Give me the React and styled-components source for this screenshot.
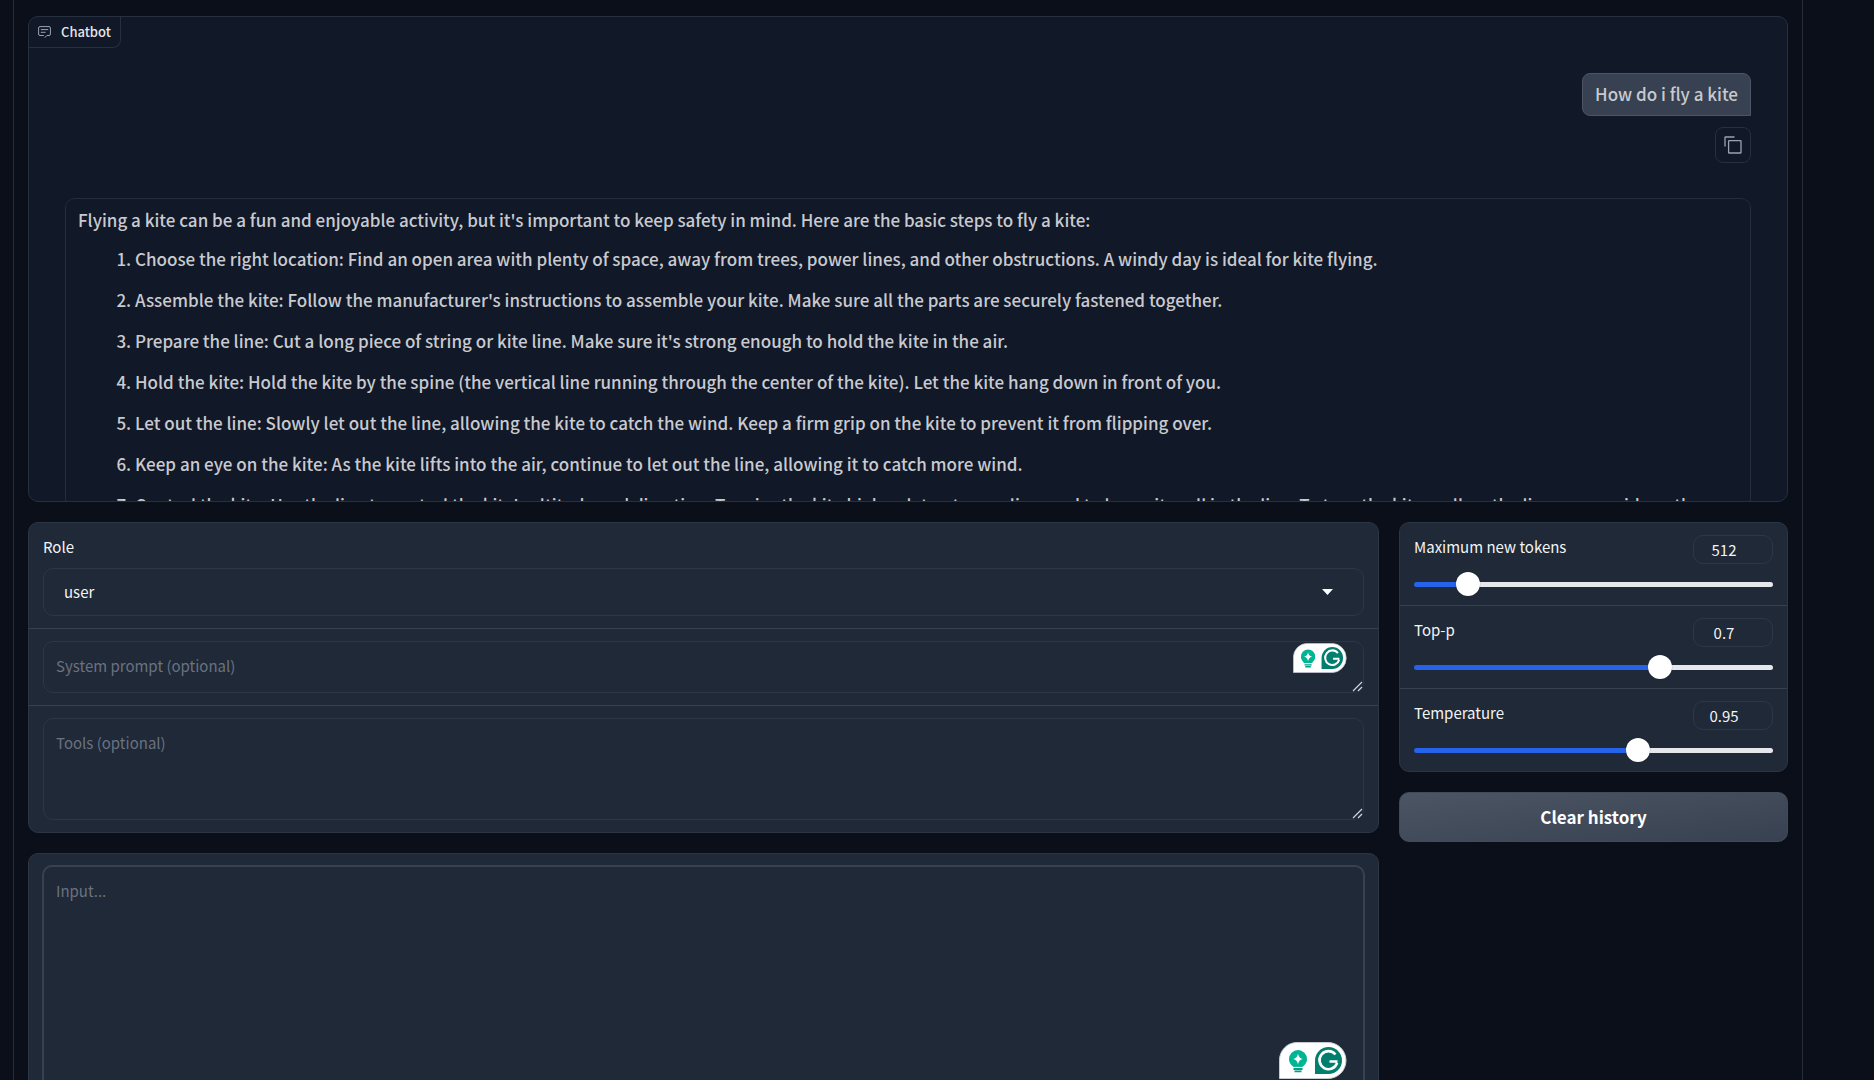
import { useState } from "react";
import styled, { createGlobalStyle } from "styled-components";

const GlobalStyle = createGlobalStyle`
  * {
    box-sizing: border-box;
  }

  body {
    margin: 0;
    background: #0b0f19;
    color: #f3f4f6;
    font-family: "Noto Sans CJK SC", "Open Sans", sans-serif;
    font-size: 15px;
    line-height: 24px;
  }

  button, input, select, textarea {
    font: inherit;
    color: inherit;
  }
`;

const Page = styled.div`
  height: 100vh;
  overflow: hidden;
  padding: 0 71px 0 13px;
`;

const Container = styled.main`
  min-height: 100%;
  display: flex;
  flex-direction: column;
  gap: 20px;
  padding: 16px 14px 0;
  border: 1px solid #252b37;
  border-width: 0 1px;
`;

const ChatPanel = styled.section`
  height: 486px;
  overflow: hidden;
  background: #111827;
  border: 1px solid #27303f;
  border-radius: 10px;
`;

const ChatLabel = styled.h2`
  width: max-content;
  height: 31px;
  margin: 0;
  padding: 0 9px;
  display: flex;
  align-items: center;
  gap: 10px;
  border: 1px solid #27303f;
  border-width: 0 1px 1px 0;
  border-radius: 0 0 8px 0;
  font-size: 13px;
  font-weight: 500;
  color: #e5e7eb;
`;

const Messages = styled.div`
  padding: 25px 36px 0;
  display: flex;
  flex-direction: column;
  font-size: 17px;
  font-weight: 500;
  line-height: 27px;
  color: #c8cad0;
`;

const UserBubble = styled.div`
  align-self: flex-end;
  padding: 6px 12px 8px;
  background: #374151;
  border: 1px solid #4b5563;
  border-radius: 8px 8px 0 8px;
`;

const CopyButton = styled.button`
  align-self: flex-end;
  width: 36px;
  height: 36px;
  margin: 11px 0 35px;
  padding: 0;
  display: grid;
  place-items: center;
  background: none;
  border: 1px solid #263040;
  border-radius: 8px;
  color: #9ca3af;
`;

const BotBubble = styled.div`
  padding: 7px 12px;
  border: 1px solid #232d3c;
  border-radius: 10px 10px 10px 0;
`;

const Intro = styled.p`
  margin: 0;
`;

const Steps = styled.ol`
  margin: 12px 0;
  padding: 0 20px 0 57px;
  display: flex;
  flex-direction: column;
  gap: 14px;
`;

const Columns = styled.div`
  display: grid;
  grid-template-columns: minmax(0, 1351fr) minmax(0, 389fr);
  gap: 20px;
`;

const Column = styled.div`
  display: flex;
  flex-direction: column;
  gap: 20px;
`;

const Panel = styled.div`
  overflow: hidden;
  background: #1f2937;
  border: 1px solid #2b3544;
  border-radius: 10px;
`;

const Block = styled.div`
  position: relative;
  padding: ${(props) => (props.$tight ? "11px 13px" : "12px 14px")};
  border-bottom: 1px solid #374151;

  &:last-child {
    border-bottom: 0;
  }
`;

const FieldLabel = styled.label`
  display: block;
  margin-bottom: 9px;
`;

const SelectWrap = styled.div`
  display: grid;
  align-items: center;

  > * {
    grid-area: 1 / 1;
  }

  svg {
    justify-self: end;
    margin-right: 31px;
    pointer-events: none;
  }
`;

const Select = styled.select`
  width: 100%;
  height: 48px;
  padding: 0 20px;
  appearance: none;
  background: #1f2937;
  border: 1px solid #2d3747;
  border-radius: 10px;
`;

const resizeGrip =
  "%3Csvg xmlns='http://www.w3.org/2000/svg' width='15' height='15' viewBox='0 0 15 15'%3E%3Cpath d='M5 14L14 5M10 14L14 10' stroke='%23d1d5db' stroke-width='1.200'/%3E%3C/svg%3E";

const TextArea = styled.textarea`
  display: block;
  width: 100%;
  height: ${(props) => props.$height}px;
  padding: 12px;
  background: #1f2937;
  border: ${(props) => (props.$strong ? "2px solid #374151" : "1px solid #2d3747")};
  border-radius: 10px;
  outline: none;
  overflow: hidden;

  &::placeholder {
    color: #6b7280;
    opacity: 1;
  }

  &::-webkit-resizer {
    background: url("data:image/svg+xml,${resizeGrip}") right bottom no-repeat;
  }
`;

const Assistant = styled.svg`
  position: absolute;
  right: 31px;
  ${(props) => (props.$large ? "bottom: 37px;" : "top: 14px;")}
`;

const SliderHead = styled.div`
  display: flex;
  justify-content: space-between;
  align-items: flex-start;
`;

const NumberInput = styled.input`
  width: 80px;
  height: 29px;
  padding: 0 18px 0 0;
  background: none;
  border: 1px solid #2d3747;
  border-radius: 10px;
  text-align: center;
  appearance: textfield;

  &::-webkit-inner-spin-button {
    display: none;
  }
`;

const Range = styled.input`
  display: block;
  width: 100%;
  height: 24px;
  margin: 8px 0 -3px;
  appearance: none;
  background: none;

  &::-webkit-slider-runnable-track {
    height: 5px;
    border-radius: 4px;
    background: linear-gradient(#2563eb, #2563eb) 0 / var(--fill) 100% no-repeat #e5e7eb;
  }

  &::-webkit-slider-thumb {
    appearance: none;
    width: 24px;
    height: 24px;
    margin-top: -10px;
    border-radius: 50%;
    background: #fff;
    box-shadow: 0 0 1px rgba(0, 0, 0, 0.5);
  }
`;

const ClearButton = styled.button`
  height: 50px;
  background: linear-gradient(to bottom right, #4b5563, #374151);
  border: 1px solid #414b5a;
  border-radius: 10px;
  font-size: 17px;
  font-weight: 700;
  color: #fff;
`;

const steps = [
  "Choose the right location: Find an open area with plenty of space, away from trees, power lines, and other obstructions. A windy day is ideal for kite flying.",
  "Assemble the kite: Follow the manufacturer's instructions to assemble your kite. Make sure all the parts are securely fastened together.",
  "Prepare the line: Cut a long piece of string or kite line. Make sure it's strong enough to hold the kite in the air.",
  "Hold the kite: Hold the kite by the spine (the vertical line running through the center of the kite). Let the kite hang down in front of you.",
  "Let out the line: Slowly let out the line, allowing the kite to catch the wind. Keep a firm grip on the kite to prevent it from flipping over.",
  "Keep an eye on the kite: As the kite lifts into the air, continue to let out the line, allowing it to catch more wind.",
  "Control the kite: Use the line to control the kite's altitude and direction. To raise the kite higher, let out more line, and to lower it, pull in the line. To turn the kite, pull on the line on one side or the other.",
];

const ChatIcon = () => (
  <svg width="13" height="12" viewBox="0 0 13 12" fill="none" stroke="#9ca3af" strokeLinecap="round" strokeLinejoin="round">
    <path d="M5.500 9.500H2A1.400 1.400 0 0 1 .6 8V2A1.400 1.400 0 0 1 2 .6h9A1.400 1.400 0 0 1 12.400 2v6A1.400 1.400 0 0 1 11 9.500H8.800L7 11.500" />
    <path d="M3.200 3.600h6.600M3.200 6.300h4" />
  </svg>
);

const CopyIcon = () => (
  <svg width="18" height="18" viewBox="0 0 18 18" fill="none" stroke="currentColor" strokeWidth="1.300">
    <rect x="4.600" y="4.600" width="12.400" height="12.400" rx="0.600" />
    <path d="M1 10.500V1.600a.6.6 0 0 1 .6-.6h8.900" />
  </svg>
);

const AssistantBadge = ({ large }) => (
  <Assistant
    $large={large}
    width={large ? 68 : 54}
    height={large ? 37 : 30}
    viewBox="0 0 68 37"
    preserveAspectRatio="none"
    aria-hidden="true"
  >
    <path d="M.5 36.500V18A17.500 17.500 0 0 1 18 .5h31a18 18 0 0 1 0 36z" fill="#fff" stroke="#c5c9d3" />
    <path d="M19 8a9 9 0 0 0-9 9c0 4 2.500 6 4.500 8h9c2-2 4.500-4 4.500-8a9 9 0 0 0-9-9z" fill="#00b594" />
    <path d="M19 11.500c.8 3.500 1.700 4.600 5 5.500-3.300.9-4.200 2-5 5.500-.8-3.500-1.700-4.600-5-5.500 3.300-.9 4.200-2 5-5.500z" fill="#fff" />
    <path d="M14 25.500h10" stroke="#fff" strokeWidth="1.200" />
    <path d="M14.500 27h9M15.500 29.300h7" stroke="#00a083" strokeWidth="1.800" />
    <path d="M36 32V18.500A13.500 13.500 0 1 1 49.500 32z" fill="#027e6f" />
    <path d="M56.500 12.500a9 9 0 1 0 1.600 8.300M50.500 19.500h8" fill="none" stroke="#fff" strokeWidth="2.600" />
  </Assistant>
);

const Slider = ({ id, label, min, max, step, initial }) => {
  const [value, setValue] = useState(initial);
  const change = (e) => setValue(Number(e.target.value));
  const fill = ((value - min) / (max - min)) * 100;

  return (
    <Block>
      <SliderHead>
        <label htmlFor={id}>{label}</label>
        <NumberInput id={id} type="number" min={min} max={max} step={step} value={value} onChange={change} />
      </SliderHead>
      <Range
        type="range"
        aria-label={label}
        min={min}
        max={max}
        step={step}
        value={value}
        onChange={change}
        style={{ "--fill": `${fill}%` }}
      />
    </Block>
  );
};

const App = () => {
  return (
    <Page>
      <GlobalStyle />
      <Container>
        <ChatPanel>
          <ChatLabel>
            <ChatIcon />
            Chatbot
          </ChatLabel>
          <Messages>
            <UserBubble>How do i fly a kite</UserBubble>
            <CopyButton aria-label="Copy message">
              <CopyIcon />
            </CopyButton>
            <BotBubble>
              <Intro>
                Flying a kite can be a fun and enjoyable activity, but it's important to keep safety in mind. Here are
                the basic steps to fly a kite:
              </Intro>
              <Steps>
                {steps.map((step) => (
                  <li key={step}>{step}</li>
                ))}
              </Steps>
            </BotBubble>
          </Messages>
        </ChatPanel>
        <Columns>
          <Column>
            <Panel>
              <Block>
                <FieldLabel htmlFor="role">Role</FieldLabel>
                <SelectWrap>
                  <Select id="role" defaultValue="user">
                    <option>user</option>
                    <option>assistant</option>
                  </Select>
                  <svg width="11" height="6" viewBox="0 0 11 6">
                    <path d="M0 0h11L5.500 6z" fill="#fff" />
                  </svg>
                </SelectWrap>
              </Block>
              <Block>
                <TextArea $height={52} aria-label="System prompt" placeholder="System prompt (optional)" />
                <AssistantBadge />
              </Block>
              <Block>
                <TextArea $height={102} aria-label="Tools" placeholder="Tools (optional)" />
              </Block>
            </Panel>
            <Panel>
              <Block $tight>
                <TextArea $height={240} $strong aria-label="Input" placeholder="Input..." />
                <AssistantBadge large />
              </Block>
            </Panel>
          </Column>
          <Column>
            <Panel>
              <Slider id="tokens" label="Maximum new tokens" min={0} max={4096} step={1} initial={512} />
              <Slider id="top-p" label="Top-p" min={0} max={1} step={0.01} initial={0.7} />
              <Slider id="temperature" label="Temperature" min={0} max={1.5} step={0.01} initial={0.95} />
            </Panel>
            <ClearButton>Clear history</ClearButton>
          </Column>
        </Columns>
      </Container>
    </Page>
  );
};

export default App;
